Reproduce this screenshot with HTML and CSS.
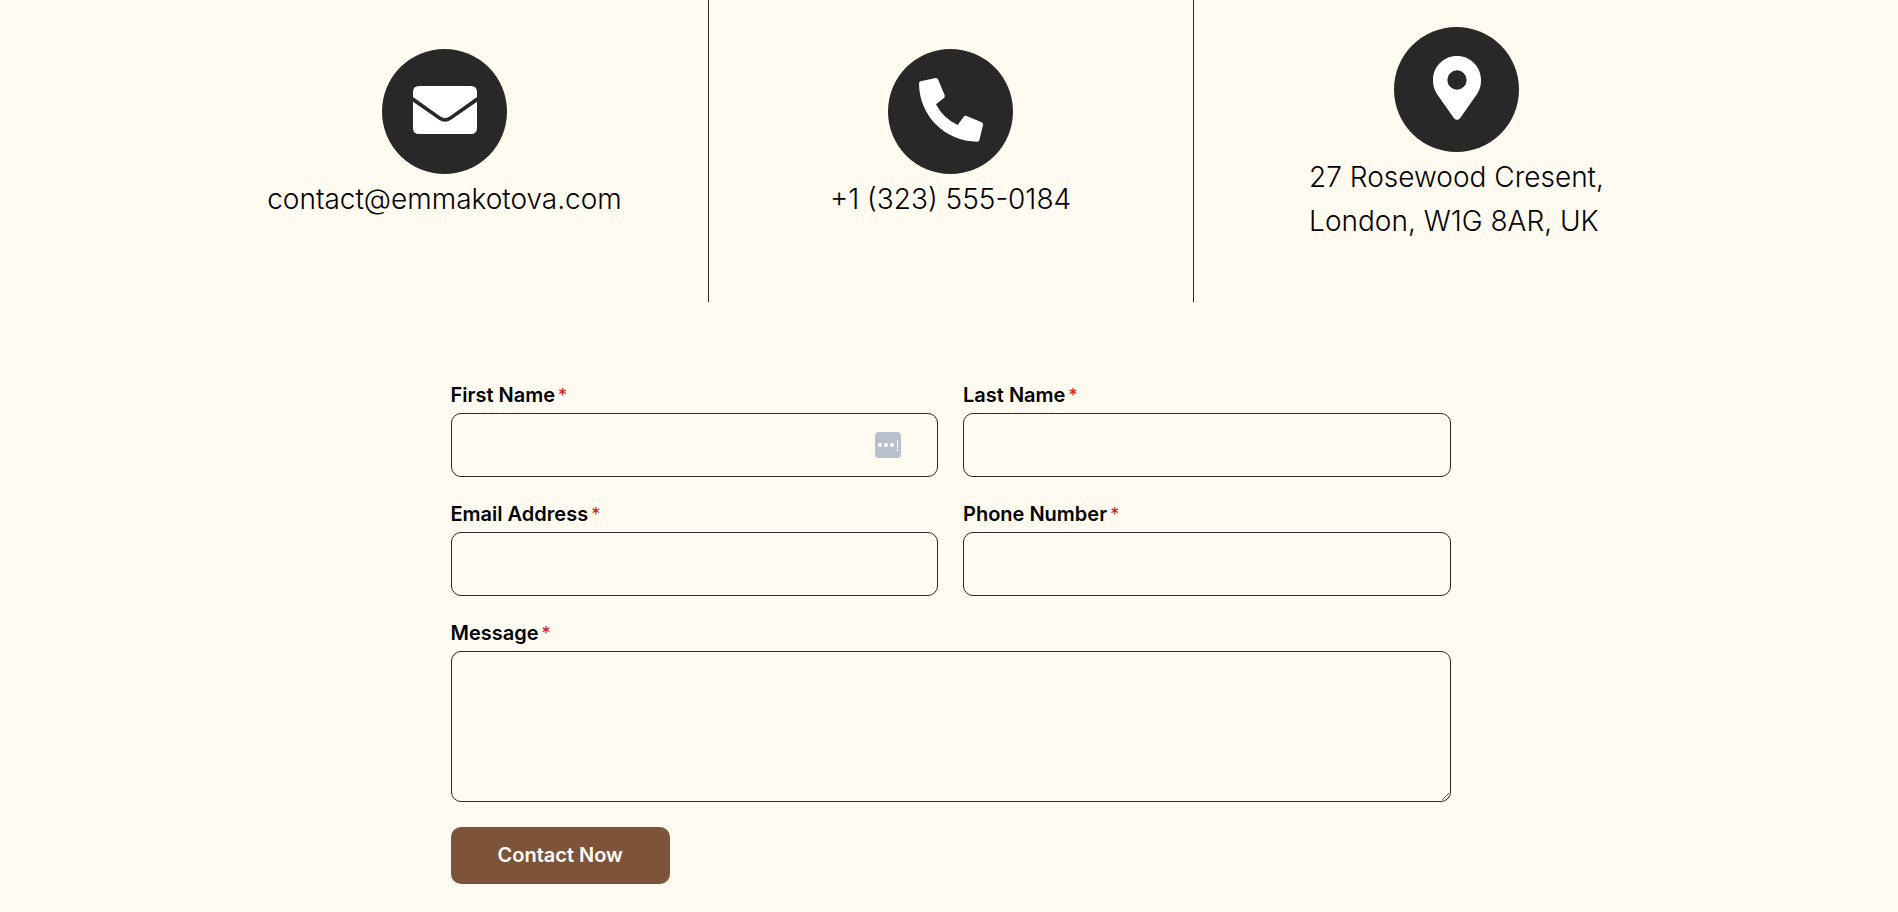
FILE: index.html
```
<!DOCTYPE html>
<html lang="en">
  <head>
    <meta charset="UTF-8" />
    <meta name="viewport" content="width=device-width, initial-scale=1.0" />
    <title>Contact</title>
    <link rel="stylesheet" href="styles.css">
  </head>
  <body>
    <!-- Contact details -->
    <section class="contact-info">
      <div class="info-item">
        <span class="info-icon">
          <svg viewBox="0 0 192 192" aria-hidden="true">
            <path d="M0 57V42Q0 24 18 24H174Q192 24 192 42V57L111 115Q96 126 81 115Z" />
            <path d="M0 71L78 125Q96 137 114 125L192 71V150Q192 168 174 168H18Q0 168 0 150Z" />
          </svg>
        </span>
        <p class="info-text">contact@emmakotova.com</p>
      </div>
      <div class="info-item info-item-middle">
        <span class="info-icon">
          <svg viewBox="0 0 192 192" aria-hidden="true">
            <path d="M5 10L50 0Q55 -1 57 4L77 52Q78 57 75 60L51 79Q72 121 116 141L134 116Q138 112 143 114L188 133Q193 136 192 141L181 187Q180 191 175 191C78 191 0 113 0 16Q0 11 5 10Z" />
          </svg>
        </span>
        <p class="info-text">+1 (323) 555-0184</p>
      </div>
      <div class="info-item">
        <span class="info-icon">
          <svg viewBox="0 0 192 192" aria-hidden="true">
            <path fill-rule="evenodd" d="M96 0C56 0 24 32 24 72C24 94 30 106 42 123L87 187Q96 196 105 187L150 123C162 106 168 94 168 72C168 32 136 0 96 0ZM96 43A29 29 0 1 1 96 101A29 29 0 1 1 96 43Z" />
          </svg>
        </span>
        <p class="info-text">27 Rosewood Cresent,<br>London, W1G 8AR, UK</p>
      </div>
    </section>

    <!-- Contact form -->
    <form class="contact-form">
      <div class="form-group">
        <label for="firstName">First Name<span class="required">*</span></label>
        <div class="input-wrap">
          <input type="text" id="firstName" name="firstName" required />
          <svg class="autofill-icon" viewBox="0 0 26 26" aria-hidden="true">
            <rect width="26" height="26" rx="4" fill="#b9bfcb" />
            <circle cx="5" cy="13" r="2" fill="#fff" />
            <circle cx="11" cy="13" r="2" fill="#fff" />
            <circle cx="17" cy="13" r="2" fill="#fff" />
            <rect x="22" y="8" width="1" height="11" fill="#fff" />
          </svg>
        </div>
      </div>
      <div class="form-group">
        <label for="lastName">Last Name<span class="required">*</span></label>
        <input type="text" id="lastName" name="lastName" required />
      </div>
      <div class="form-group">
        <label for="email">Email Address<span class="required">*</span></label>
        <input type="email" id="email" name="email" required />
      </div>
      <div class="form-group">
        <label for="phone">Phone Number<span class="required">*</span></label>
        <input type="tel" id="phone" name="phone" required />
      </div>
      <div class="form-group full-width">
        <label for="message">Message<span class="required">*</span></label>
        <textarea id="message" name="message" required></textarea>
      </div>
      <button type="submit" class="submit-button">Contact Now</button>
    </form>
  </body>
</html>
```
FILE: styles.css
```
* {
  box-sizing: border-box;
}

body {
  margin: 0;
  padding-left: 3px;
  background-color: #fffbf0;
  color: #000;
  font-family: Inter, "Liberation Sans", sans-serif;
}

.contact-info {
  display: grid;
  grid-template-columns: repeat(3, 1fr);
  width: 100%;
  max-width: 1518px;
  margin: 0 auto;
}

.info-item {
  display: flex;
  flex-direction: column;
  align-items: center;
  justify-content: center;
  padding: 27px 0 59px;
}

.info-item-middle {
  margin: 0 10px;
  border-left: 1px solid #282828;
  border-right: 1px solid #282828;
}

.info-icon {
  display: flex;
  align-items: center;
  justify-content: center;
  width: 125px;
  height: 125px;
  padding-bottom: 3px;
  border-radius: 50%;
  background-color: #282828;
}

.info-icon svg {
  width: 64px;
  height: 64px;
  fill: #fff;
}

.info-text {
  margin: 3px 0 0;
  font-size: 28px;
  font-weight: 300;
  line-height: 44px;
}

.contact-form {
  display: grid;
  grid-template-columns: 1fr 1fr;
  gap: 25px;
  width: 100%;
  max-width: 1000px;
  margin: 81px auto 25px;
}

.form-group label {
  display: block;
  margin-bottom: 6px;
  font-size: 20px;
  font-weight: 600;
  line-height: 24px;
}

.required {
  margin-left: 3px;
  color: #d01818;
  font-size: 18px;
  font-weight: 400;
  line-height: 1;
}

.form-group input,
.form-group textarea {
  display: block;
  width: 100%;
  padding: 10px 20px;
  border: 1px solid #282828;
  border-radius: 10px;
  background-color: transparent;
  font-family: inherit;
  font-size: 20px;
}

.form-group input {
  height: 64px;
}

.form-group textarea {
  height: 151px;
  resize: vertical;
}

.full-width {
  grid-column: 1 / -1;
}

.input-wrap {
  position: relative;
}

.autofill-icon {
  position: absolute;
  top: 19px;
  right: 37px;
  width: 26px;
  height: 26px;
}

.submit-button {
  justify-self: start;
  padding: 16px 47px;
  border: none;
  border-radius: 10px;
  background-color: #7d5439;
  color: #fff;
  font-family: inherit;
  font-size: 20px;
  font-weight: 600;
  line-height: 25px;
  cursor: pointer;
}
```
